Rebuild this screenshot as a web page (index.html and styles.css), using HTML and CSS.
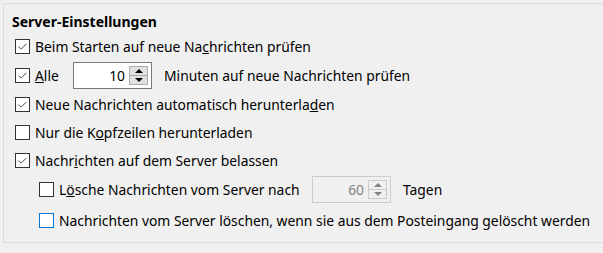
FILE: index.html
```html
<!DOCTYPE html>
<html lang="de">
<head>
<meta charset="utf-8">
<link rel="stylesheet" href="styles.css">
</head>
<body>
<div class="frame">
  <div class="title">Server-Einstellungen</div>
  <div class="row">
    <span class="cb checked"><svg viewBox="0 0 15 15"><polyline points="3,7.5 6,10.5 12,4.5"/></svg></span>
    <span class="lbl">Beim Starten auf neue Na<u>c</u>hrichten prüfen</span>
  </div>
  <div class="row tall">
    <span class="cb checked"><svg viewBox="0 0 15 15"><polyline points="3,7.5 6,10.5 12,4.5"/></svg></span>
    <span class="lbl w-alle"><u>A</u>lle</span>
    <span class="spin">
      <span class="val">10</span>
      <span class="btns"><span class="btn up"></span><span class="btn down"></span></span>
    </span>
    <span class="lbl after">Minuten auf neue Nachrichten prüfen</span>
  </div>
  <div class="row">
    <span class="cb checked"><svg viewBox="0 0 15 15"><polyline points="3,7.5 6,10.5 12,4.5"/></svg></span>
    <span class="lbl">Neue Nachrichten automatisch herunterla<u>d</u>en</span>
  </div>
  <div class="row">
    <span class="cb"></span>
    <span class="lbl">Nur die K<u>o</u>pfzeilen herunterladen</span>
  </div>
  <div class="row">
    <span class="cb checked"><svg viewBox="0 0 15 15"><polyline points="3,7.5 6,10.5 12,4.5"/></svg></span>
    <span class="lbl">Nachr<u>i</u>chten auf dem Server belassen</span>
  </div>
  <div class="nested">
    <div class="row">
      <span class="cb"></span>
      <span class="lbl w-loesche">L<u>ö</u>sche Nachrichten vom Server nach</span>
      <span class="spin disabled">
        <span class="val">60</span>
        <span class="btns"><span class="btn up"></span><span class="btn down"></span></span>
      </span>
      <span class="lbl after">Tagen</span>
    </div>
    <div class="row">
      <span class="cb cb-focus"></span>
      <span class="lbl">Nachrichten vom Server löschen, wenn sie aus dem Postein<u>g</u>ang gelöscht werden</span>
    </div>
  </div>
</div>
</body>
</html>
```

FILE: styles.css
```css
html, body {
  margin: 0;
  padding: 0;
  background: #f0f0f0;
  overflow: hidden;
}
body {
  font-family: "Segoe UI", "Noto Sans", "DejaVu Sans", sans-serif;
  font-size: 13.85px;
  color: #000;
  width: 603px;
  height: 253px;
}
.frame {
  margin: 3px 0 0 3px;
  width: 600px;
  height: 240px;
  box-sizing: border-box;
  border: 1px solid #dcdcdc;
  border-right: none;
  padding: 0 0 0 8px;
}
.title {
  height: 28px;
  line-height: 20px;
  padding-top: 8px;
  box-sizing: border-box;
  font-weight: bold;
  font-size: 14px;
}
.row {
  display: flex;
  align-items: center;
  height: 28px;
  padding-left: 3px;
}
.row.tall {
  height: 30px;
}
.nested {
  padding-left: 24px;
}
.nested .row {
  height: 31px;
}
.cb {
  width: 15px;
  height: 15px;
  box-sizing: border-box;
  border: 1px solid #333;
  background: #fff;
  flex: none;
  margin-right: 5px;
  display: flex;
}
.cb-focus {
  border: 1px solid #0078d7;
}
.cb svg {
  width: 13px;
  height: 13px;
}
.cb polyline {
  fill: none;
  stroke: #444;
  stroke-width: 1.1;
}
.lbl {
  white-space: nowrap;
}
.w-alle {
  width: 38px;
}
.w-loesche {
  width: 253px;
}
.after {
  margin-left: 12px;
}
.spin {
  width: 79px;
  height: 27px;
  box-sizing: border-box;
  border: 1px solid #7a7a7a;
  background: #fff;
  display: flex;
  align-items: center;
  justify-content: flex-end;
  padding-right: 3px;
  flex: none;
}
.spin .val {
  margin-right: 4px;
}
.btns {
  display: flex;
  flex-direction: column;
  width: 19px;
  height: 19px;
}
.btn {
  flex: 1;
  box-sizing: border-box;
  border: 1px solid #adadad;
  background: #e1e1e1;
  position: relative;
}
.btn.down {
  border-top: none;
}
.btn::after {
  content: "";
  position: absolute;
  left: 50%;
  top: 50%;
  margin-left: -4px;
  border-left: 4px solid transparent;
  border-right: 4px solid transparent;
}
.btn.up::after {
  margin-top: -2px;
  border-bottom: 4px solid #000;
}
.btn.down::after {
  margin-top: -2px;
  border-top: 4px solid #000;
}
.spin.disabled {
  border-color: #cccccc;
  background: #f0f0f0;
  color: #838383;
}
.spin.disabled .btn {
  border-color: #cccccc;
  background: #f0f0f0;
}
.spin.disabled .btn.up::after {
  border-bottom-color: #838383;
}
.spin.disabled .btn.down::after {
  border-top-color: #838383;
}
```
